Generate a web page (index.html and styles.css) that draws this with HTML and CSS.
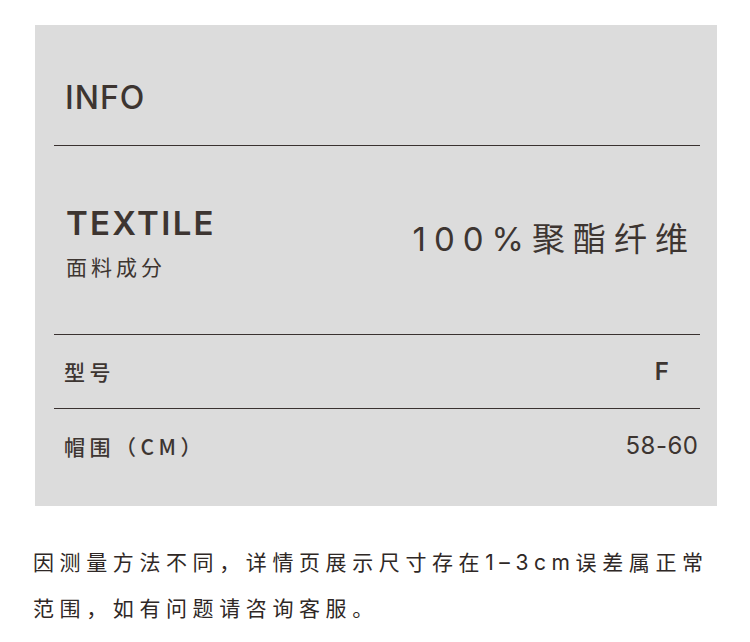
FILE: index.html
```html
<!DOCTYPE html>
<html lang="zh-CN">
<head>
<meta charset="utf-8">
<title>INFO</title>
<link rel="stylesheet" href="styles.css">
</head>
<body>
<section class="card">
  <header class="card-head">
    <h1 class="title">INFO</h1>
  </header>
  <div class="material">
    <div class="material-label">
      <div class="en">TEXTILE</div>
      <div class="cn">面料成分</div>
    </div>
    <div class="material-value">100%聚酯纤维</div>
  </div>
  <div class="row row-line">
    <span class="row-label">型号</span>
    <span class="row-value bold">F</span>
  </div>
  <div class="row">
    <span class="row-label">帽围（CM）</span>
    <span class="row-value">58-60</span>
  </div>
</section>
<p class="note">因测量方法不同，详情页展示尺寸存在1–3cm误差属正常范围，如有问题请咨询客服。</p>
</body>
</html>
```
FILE: styles.css
```css
html, body {
  margin: 0;
  padding: 0;
  background: #ffffff;
}
body {
  width: 750px;
  height: 642px;
  overflow: hidden;
  color: #3d3531;
  font-family: "Inter", "Noto Sans CJK SC", sans-serif;
}
.card {
  box-sizing: border-box;
  margin: 25px 0 0 35px;
  width: 682px;
  height: 481px;
  background: #dcdcdc;
  padding: 0 17px 0 19px;
}
.card-head {
  box-sizing: border-box;
  height: 121px;
  padding: 57px 0 0 11px;
  border-bottom: 1px solid #3a3230;
}
.title {
  margin: 0;
  font-size: 32px;
  line-height: 32px;
  font-weight: 500;
  letter-spacing: 1px;
}
.material {
  box-sizing: border-box;
  height: 189px;
  display: flex;
  justify-content: space-between;
  align-items: flex-start;
  padding: 61px 4px 0 12px;
  border-bottom: 1px solid #3a3230;
}
.material-label .en {
  font-size: 33px;
  line-height: 33px;
  font-weight: 600;
  letter-spacing: 2.3px;
}
.material-label .cn {
  margin-top: 16px;
  font-family: "Noto Sans CJK SC", sans-serif;
  font-size: 21px;
  line-height: 21px;
  letter-spacing: 4px;
}
.material-value {
  margin-top: 16px;
  font-family: "Inter", "Noto Sans CJK SC", sans-serif;
  font-weight: 400;
  font-size: 33px;
  line-height: 33px;
  letter-spacing: 8px;
}
.row {
  box-sizing: border-box;
  height: 74px;
  display: flex;
  align-items: center;
  justify-content: space-between;
  padding: 0 0 0 10px;
}
.row-line {
  border-bottom: 1px solid #3a3230;
}
.row-label {
  font-family: "Noto Sans CJK SC", sans-serif;
  font-size: 21px;
  line-height: 21px;
  font-weight: 500;
  letter-spacing: 4.5px;
}
.row-value {
  flex-shrink: 0;
  width: 76px;
  text-align: center;
  white-space: nowrap;
  font-size: 24px;
  line-height: 24px;
  letter-spacing: 0.5px;
}
.row-value.bold {
  font-weight: 600;
}
.note {
  margin: 34px 0 0 0;
  padding: 0 40px 0 33px;
  font-family: "Inter", "Noto Sans CJK SC", sans-serif;
  font-size: 21px;
  line-height: 46px;
  letter-spacing: 5.6px;
  color: #2f2826;
}
```
